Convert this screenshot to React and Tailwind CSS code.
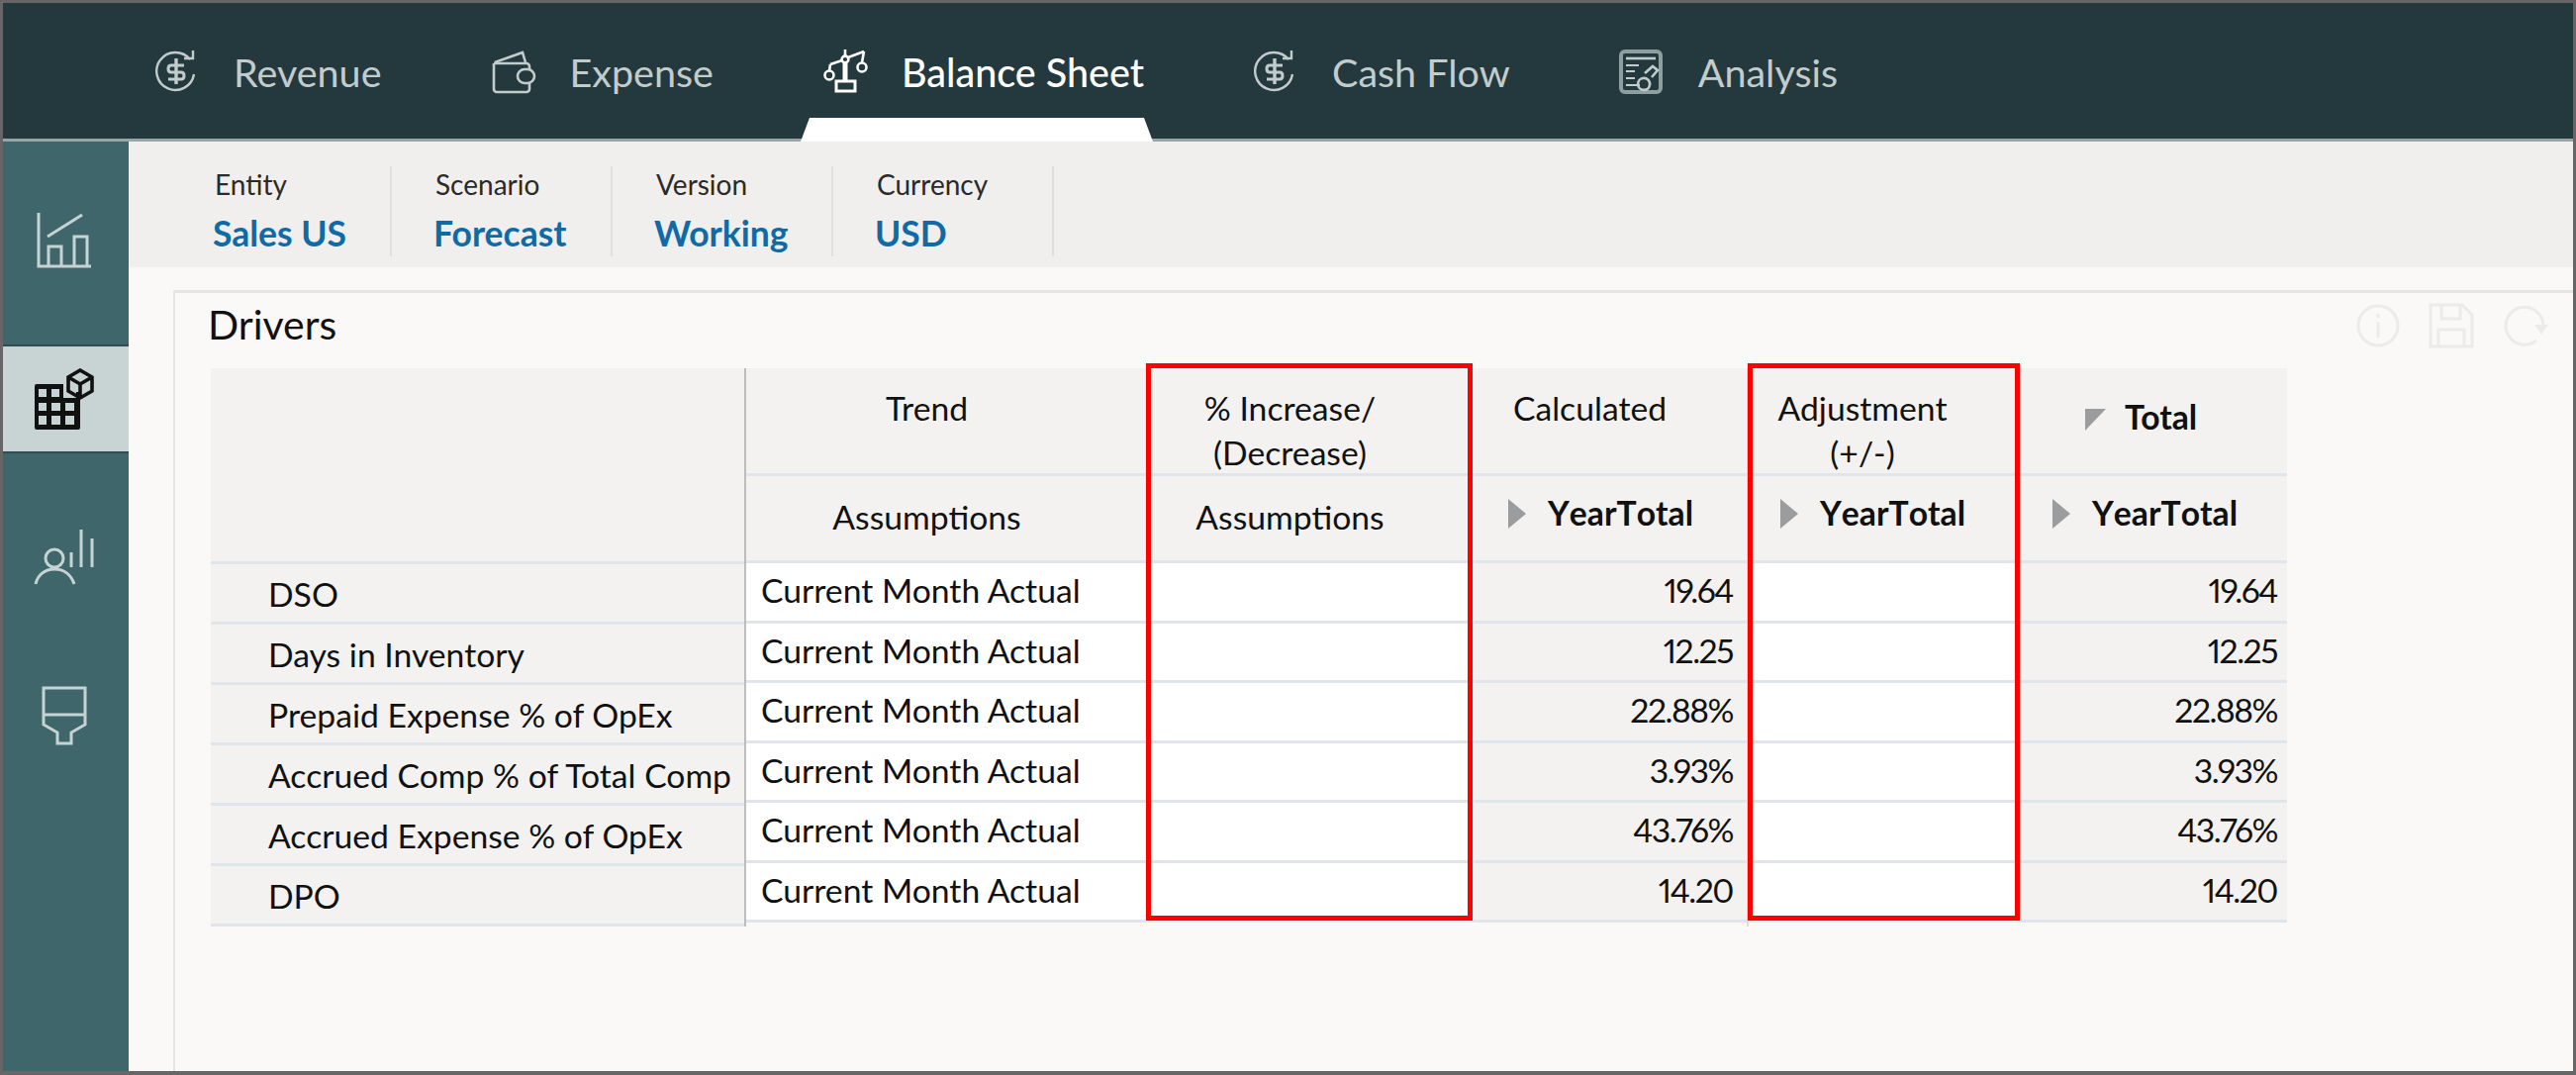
const tabIcon = "w-[46px] h-[46px] shrink-0";

const RevenueIcon = () => (
  <svg viewBox="0 0 46 46" className={tabIcon} fill="none" stroke="currentColor" strokeWidth="2.4">
    <path d="M36 10A19 19 0 1 0 40 25" />
    <path d="M30 9l9 0 0-8" />
    <path d="M30 16H17c-4 0-4 7 0 7h10c4 0 4 7 0 7H14" strokeWidth="3" />
    <path d="M22 9v26" strokeWidth="3.4" />
  </svg>
);

const WalletIcon = () => (
  <svg viewBox="0 0 46 46" className={tabIcon} fill="none" stroke="currentColor" strokeWidth="2.6">
    <path d="M3 14v26a3 3 0 0 0 3 3h30a3 3 0 0 0 3-3v-6M39 20v-3a3 3 0 0 0-3-3H3" />
    <path d="M4 13L32 3l3 10" />
    <rect x="27" y="20" width="17" height="14" rx="7" />
  </svg>
);

const ScaleIcon = () => (
  <svg viewBox="0 0 46 46" className={tabIcon} fill="none" stroke="currentColor" strokeWidth="2.6">
    <path d="M8 15l12-4M26 8l16-6" />
    <circle cx="23" cy="10" r="3.4" />
    <path d="M23 14v18" strokeWidth="5" />
    <path d="M23 0v6" />
    <circle cx="7" cy="26" r="4.5" />
    <path d="M8 15l-1 7M42 2l-2 11" />
    <circle cx="40" cy="18" r="4.5" />
    <rect x="14" y="32" width="19" height="10" strokeWidth="3" />
  </svg>
);

const AnalysisIcon = () => (
  <svg viewBox="0 0 46 46" className={tabIcon} fill="none" stroke="#8d9f9f">
    <rect x="2" y="2" width="40" height="41" rx="4" strokeWidth="4" />
    <path d="M7 9h30" strokeWidth="2.6" stroke="#c3cccc" />
    <path d="M7 16h13M7 22h9M7 29h9M7 36h14" strokeWidth="2" stroke="#c3cccc" />
    <path d="M24 29a6 6 0 1 0 7 7 6 6 0 0 0-7-7zM26 24l8-7 5 4-6 7" strokeWidth="2.6" stroke="#c3cccc" />
  </svg>
);

const ChartIcon = () => (
  <svg viewBox="0 0 56 56" className="w-[56px] h-[56px]" fill="none" stroke="#c5d3d4" strokeWidth="3">
    <path d="M2 0v54h53" />
    <path d="M11 24L46 2" />
    <path d="M12 54V34h13v20M38 54V24h13v30" />
  </svg>
);

const GridIcon = () => (
  <svg viewBox="0 0 62 62" className="w-[62px] h-[62px]" fill="none">
    <path d="M1 18a2 2 0 0 1 2-2h27v14h13v-6h4v36a2 2 0 0 1-2 2H3a2 2 0 0 1-2-2z" fill="#111" />
    <path d="M5 21h8v8H5zM18 21h8v8h-8zM5 35h8v8H5zM18 35h9v8h-9zM5 48h8v9H5zM18 48h9v9h-9zM32 48h9v9h-9zM32 35h9v8h-9z" fill="#c8d3d4" />
    <path d="M47 2l12 7v14l-12 7-12-7V9zM35 9l12 7 12-7M47 16v14" stroke="#111" strokeWidth="3.6" />
  </svg>
);

const UserBarsIcon = () => (
  <svg viewBox="0 0 62 56" className="w-[62px] h-[56px]" fill="none" stroke="#c5d3d4" strokeWidth="3">
    <circle cx="21" cy="29" r="9" />
    <path d="M2 55c2-9 9-15 19-15s17 6 20 15" />
    <path d="M38 38V23M48 38V0M59 38V9" />
  </svg>
);

const FunnelIcon = () => (
  <svg viewBox="0 0 46 60" className="w-[46px] h-[60px]" fill="none" stroke="#c5d3d4" strokeWidth="3">
    <path d="M2 2h42v37L30 47v11H16V47L2 39zM2 29h42" />
  </svg>
);

const tabs = [
  { label: "Revenue", icon: <RevenueIcon /> },
  { label: "Expense", icon: <WalletIcon /> },
  { label: "Balance Sheet", icon: <ScaleIcon />, active: true },
  { label: "Cash Flow", icon: <RevenueIcon /> },
  { label: "Analysis", icon: <AnalysisIcon /> },
];

const filters = [
  ["Entity", "Sales US"],
  ["Scenario", "Forecast"],
  ["Version", "Working"],
  ["Currency", "USD"],
];

const rows = [
  ["DSO", "19.64"],
  ["Days in Inventory", "12.25"],
  ["Prepaid Expense % of OpEx", "22.88%"],
  ["Accrued Comp % of Total Comp", "3.93%"],
  ["Accrued Expense % of OpEx", "43.76%"],
  ["DPO", "14.20"],
];

const Expand = () => (
  <span className="w-0 h-0 mr-[22px] border-y-[15px] border-y-transparent border-l-[18px] border-l-[#9a9c9e]" />
);

const YearTotal = ({ className }) => (
  <div className={`h-[88px] flex items-center pb-[10px] bg-[#f3f2f0] border-b-[3px] border-[#dfe5ea] font-bold [font-kerning:none] ${className || "pl-[36px]"}`}>
    <Expand />
    YearTotal
  </div>
);

const HeadCell = ({ children, className }) => (
  <div className={`h-[109px] bg-[#f3f2f0] border-b-[3px] border-[#dfe5ea] text-center leading-[45px] pt-[18px] ${className || "pr-[40px]"}`}>
    {children}
  </div>
);

const AssumptionHead = () => (
  <div className="h-[88px] flex items-center justify-center pr-[40px] pb-[2px] bg-[#f3f2f0] border-b-[3px] border-[#dfe5ea]">
    Assumptions
  </div>
);

const Cell = ({ children, className }) => (
  <div className={`h-[60.5px] flex items-center pb-[2px] border-b-[3px] border-[#dfe5ea] ${className || ""}`}>
    {children}
  </div>
);

export default function App() {
  return (
    <div className="w-full h-screen flex flex-col overflow-hidden border-t-[3px] border-x-[3px] border-b-[4px] border-[#666] bg-[#faf9f7] text-[#111] text-[33.7px] font-['Lato',sans-serif]">
      <nav className="h-[140px] shrink-0 flex gap-[110px] pl-[153px] pb-[2px] bg-[#24393e] border-b-[3px] border-[#9aa5a7]">
        {tabs.map((t) => (
          <div key={t.label} className={`relative flex items-center gap-[34px] pt-[4px] text-[39.5px] ${t.active ? "text-white font-medium" : "text-[#c3cccc]"}`}>
            {t.icon}
            <span>{t.label}</span>
            {t.active && (
              <div className="absolute left-[-22px] bottom-[-5px] w-[356px] h-[24px] bg-white [clip-path:polygon(9px_0,347px_0,100%_100%,0_100%)]" />
            )}
          </div>
        ))}
      </nav>

      <div className="flex-1 flex min-h-0">
        <aside className="w-[127px] shrink-0 flex flex-col gap-[50px] pt-[45px] bg-[#3f666a]">
          <div className="h-[110px] flex items-center justify-center pr-[4px]"><ChartIcon /></div>
          <div className="h-[110px] flex items-center justify-center pr-[4px] bg-[#c8d3d4] border-y-2 border-[#2f4d50]"><GridIcon /></div>
          <div className="h-[110px] flex items-center justify-center pr-[4px]"><UserBarsIcon /></div>
          <div className="h-[110px] flex items-center justify-center pr-[4px]"><FunnelIcon /></div>
        </aside>

        <main className="flex-1 flex flex-col min-w-0">
          <div className="h-[127px] shrink-0 flex items-end pl-[43px] pb-[11px] bg-[#f0efed]">
            {filters.map(([name, value]) => (
              <div key={name} className="w-[223px] h-[91px] pl-[42px] border-r-2 border-[#e0dfdd]">
                <div className="pl-[2px] text-[28px] leading-[36px] text-[#2a2a28]">{name}</div>
                <div className="mt-[11px] text-[35.5px] leading-[42px] font-bold text-[#0f6aa8]">{value}</div>
              </div>
            ))}
          </div>

          <div className="flex-1 pt-[23px] pl-[45px] min-h-0">
            <section className="h-full border-l-2 border-t-[3px] border-[#e5e6e4]">
              <div className="h-[76px] flex justify-between items-start pl-[33px] pr-[25px]">
                <h2 className="text-[41px] leading-[64px]">Drivers</h2>
                <div className="flex items-center gap-[29px] pt-[10px] text-[#ecebe9]">
                  <svg viewBox="0 0 44 44" className="w-[44px] h-[44px]" fill="none" stroke="currentColor" strokeWidth="3">
                    <circle cx="22" cy="22" r="20" />
                    <path d="M22 18v16M22 10v4" />
                  </svg>
                  <svg viewBox="0 0 46 46" className="w-[46px] h-[46px]" fill="none" stroke="currentColor" strokeWidth="3">
                    <path d="M2 2h32l10 10v32H2zM13 2v14h19V2M10 44V27h26v17" />
                  </svg>
                  <svg viewBox="0 0 46 42" className="w-[46px] h-[42px]" fill="none" stroke="currentColor" strokeWidth="3">
                    <path d="M41 21A19 19 0 1 0 34 36" />
                    <path d="M32 20h14L39 30z" fill="currentColor" stroke="none" />
                  </svg>
                </div>
              </div>

              <div className="relative flex ml-[36px] w-[2098px] text-[#111]">
                <div className="w-[539px] shrink-0 bg-[#f3f2f0]">
                  <div className="h-[198px] border-b-[3px] border-[#dfe5ea]" />
                  {rows.map(([name]) => (
                    <div key={name} className="h-[61px] flex items-center pl-[58px] pt-[3px] border-b-[3px] border-[#dfe5ea] whitespace-nowrap">
                      {name}
                    </div>
                  ))}
                </div>

                <div className="w-[407px] shrink-0 border-l-2 border-[#bdbdbb]">
                  <HeadCell>Trend</HeadCell>
                  <AssumptionHead />
                  {rows.map(([name]) => (
                    <Cell key={name} className="bg-white pl-[15px]">Current Month Actual</Cell>
                  ))}
                </div>

                <div className="w-[329px] shrink-0">
                  <HeadCell>% Increase/<br />(Decrease)</HeadCell>
                  <AssumptionHead />
                  {rows.map(([name]) => (
                    <Cell key={name} className="bg-white" />
                  ))}
                </div>

                <div className="w-[277px] shrink-0">
                  <HeadCell>Calculated</HeadCell>
                  <YearTotal />
                  {rows.map(([name, val]) => (
                    <Cell key={name} className="justify-end pr-[14px] bg-[#f3f2f0] proportional-nums tracking-[-1.5px]">{val}</Cell>
                  ))}
                </div>

                <div className="w-[276px] shrink-0 border-l-2 border-[#dcdcda]">
                  <HeadCell className="pr-[44px]">Adjustment<br />(+/-)</HeadCell>
                  <YearTotal className="pl-[32px]" />
                  {rows.map(([name]) => (
                    <Cell key={name} className="bg-white" />
                  ))}
                </div>

                <div className="w-[270px] shrink-0">
                  <div className="h-[109px] flex items-center pl-[66px] pb-[8px] bg-[#f3f2f0] border-b-[3px] border-[#dfe5ea] font-bold">
                    <span className="w-0 h-0 mr-[19px] mt-[6px] border-t-[22px] border-t-[#9a9c9e] border-r-[21px] border-r-transparent" />
                    Total
                  </div>
                  <YearTotal className="pl-[33px]" />
                  {rows.map(([name, val]) => (
                    <Cell key={name} className="justify-end pr-[10px] bg-[#f3f2f0] proportional-nums tracking-[-1.5px]">{val}</Cell>
                  ))}
                </div>

                <div className="absolute left-[945px] top-[-5px] w-[330px] h-[563px] border-[5px] border-[#ff0000]" />
                <div className="absolute left-[1553px] top-[-5px] w-[275px] h-[563px] border-[5px] border-[#ff0000]" />
              </div>
            </section>
          </div>
        </main>
      </div>
    </div>
  );
}
